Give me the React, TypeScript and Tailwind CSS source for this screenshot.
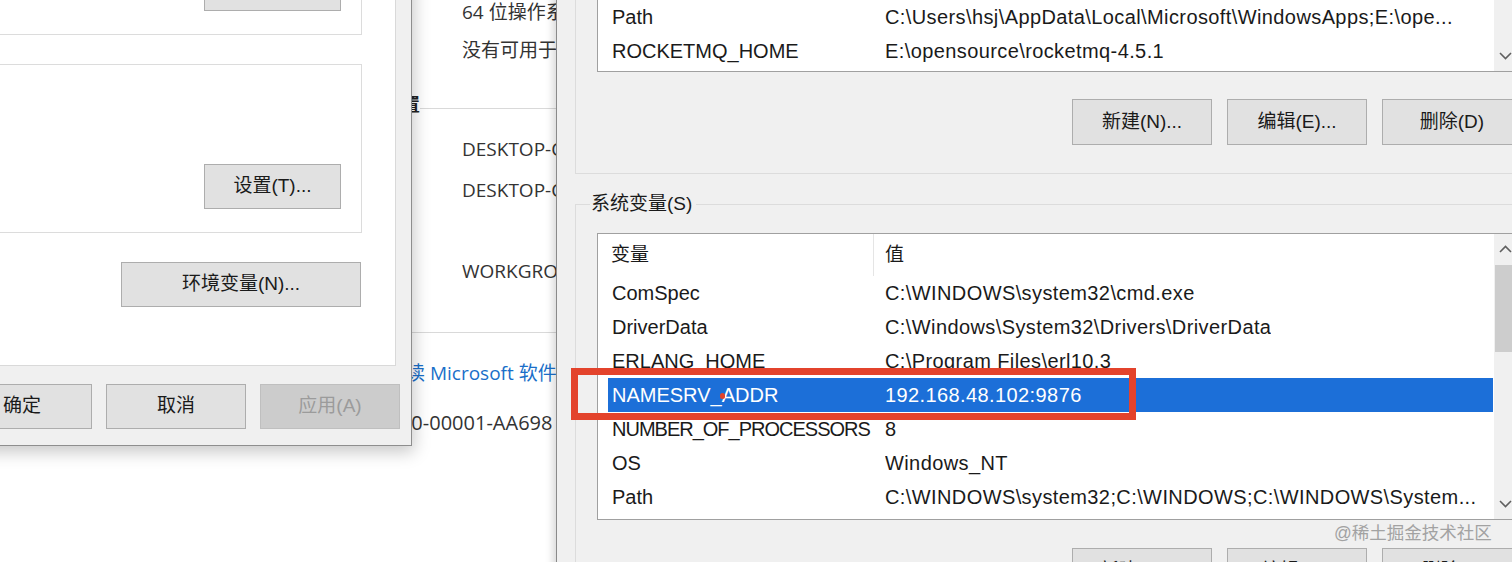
import React from "react";

const F = "font-['Liberation_Sans','Noto_Sans_CJK_SC',sans-serif]";
const FO = "font-['Open_Sans','Noto_Sans_CJK_SC',sans-serif]";

function Btn({
  label,
  className = "",
  disabled = false,
}: {
  label: string;
  className?: string;
  disabled?: boolean;
}) {
  return (
    <div
      className={`flex shrink-0 items-center justify-center border text-[19px] ${F} ${
        disabled
          ? "border-[#bfbfbf] bg-[#cccccc] text-[#9b9b9b]"
          : "border-[#adadad] bg-[#e1e1e1] text-[#1a1a1a]"
      } ${className}`}
    >
      {label}
    </div>
  );
}

function Chevron({ up = false }: { up?: boolean }) {
  return (
    <svg width="13" height="8" viewBox="0 0 13 8" fill="none">
      <path
        d={up ? "M1 7 L6.5 1.5 L12 7" : "M1 1 L6.5 6.5 L12 1"}
        stroke="#5f5f5f"
        strokeWidth="1.6"
      />
    </svg>
  );
}

function Row({
  name,
  value,
  selected = false,
  tight = false,
}: {
  name: string;
  value: string;
  selected?: boolean;
  tight?: boolean;
}) {
  return (
    <div
      className={`flex h-[34px] shrink-0 items-center whitespace-nowrap text-[20px] ${F} ${
        selected ? "bg-[#1c6fd8] text-white" : "text-[#1a1a1a]"
      }`}
    >
      <div className={`w-[277px] shrink-0 pl-[4px] ${tight ? "tracking-[-1px]" : ""}`}>{name}</div>
      <div className="overflow-hidden tracking-[0.4px]">{value}</div>
    </div>
  );
}

export default function App() {
  return (
    <div className="relative h-[562px] w-[1512px] overflow-hidden bg-white">
      {/* background: system info window */}
      <div className={`absolute left-[300px] top-0 flex h-[562px] w-[256px] flex-col overflow-hidden bg-white text-[19px] text-[#333333] ${FO}`}>
        <div className="flex h-[24px] shrink-0 items-center whitespace-nowrap pl-[162px]">64 位操作系统，基于 x64 的处理器</div>
        <div className="mt-[14px] flex h-[24px] shrink-0 items-center whitespace-nowrap pl-[162px]">没有可用于此显示器的笔或触控输入</div>
        <div className="mt-[30px] flex h-[24px] shrink-0 items-center">
          <div className="flex w-[120px] shrink-0 justify-end overflow-hidden whitespace-nowrap text-[18px] font-bold text-[#222222]">
            计算机名、域和工作组设置
          </div>
          <div className="mt-[8px] h-px flex-1 bg-[#d9d9d9]" />
        </div>
        <div className="mt-[21px] flex h-[24px] shrink-0 items-center whitespace-nowrap pl-[162px]">DESKTOP-OFNQ7K1</div>
        <div className="mt-[17px] flex h-[24px] shrink-0 items-center whitespace-nowrap pl-[162px]">DESKTOP-OFNQ7K1</div>
        <div className="mt-[57px] flex h-[24px] shrink-0 items-center whitespace-nowrap pl-[162px]">WORKGROUP</div>
        <div className="mt-[49px] h-px shrink-0 bg-[#d9d9d9]" />
        <div className="mt-[28px] flex h-[24px] shrink-0 items-center whitespace-nowrap pl-[87px] text-[#1a6fc9]">阅读 Microsoft 软件许可条款</div>
        <div className="mt-[26px] flex h-[24px] shrink-0 items-center whitespace-nowrap pl-[2px] text-[20px]">00330-80000-00001-AA698</div>
      </div>

      {/* left dialog: system properties */}
      <div className="absolute left-[-100px] top-[-40px] flex h-[486px] w-[512px] flex-col border-b border-r border-[#8e8e8e] bg-[#f0f0f0] shadow-[2px_6px_16px_rgba(0,0,0,0.22)]">
        <div className="flex h-[406px] w-[496px] shrink-0 flex-col border-b border-r border-[#d9d9d9] bg-white pr-[33px]">
          <div className="flex h-[75px] shrink-0 items-end justify-end border-b border-r border-[#dcdcdc] pb-[23px] pr-[20px]">
            <Btn label="" className="h-[45px] w-[137px]" />
          </div>
          <div className="mt-[29px] flex h-[169px] shrink-0 items-end justify-end border border-[#dcdcdc] pb-[23px] pr-[20px]">
            <Btn label="设置(T)..." className="h-[45px] w-[137px]" />
          </div>
          <Btn label="环境变量(N)..." className="mr-[1px] mt-[29px] h-[45px] w-[240px] self-end" />
        </div>
        <div className="mt-[18px] flex justify-end gap-[14px] pr-[11px]">
          <Btn label="确定" className="h-[45px] w-[140px]" />
          <Btn label="取消" className="h-[45px] w-[140px]" />
          <Btn label="应用(A)" disabled className="h-[45px] w-[140px]" />
        </div>
      </div>

      {/* right dialog: environment variables */}
      <div className="absolute left-[556px] top-[-40px] flex h-[700px] w-[1000px] flex-col border-l border-[#8a8a8a] bg-[#f0f0f0] pl-[18px] shadow-[-3px_0_8px_rgba(0,0,0,0.16)]">
        {/* user variables group */}
        <div className="flex flex-col border-b border-l border-[#dcdcdc] pb-[28px] pl-[21px]">
          <div className="flex h-[112px] w-[924px] shrink-0 border border-[#a0a0a0] bg-white">
            <div className="flex flex-1 flex-col justify-end pb-[3px] pl-[10px] pr-[1px]">
              <Row name="Path" value={"C:\\Users\\hsj\\AppData\\Local\\Microsoft\\WindowsApps;E:\\ope..."} />
              <Row name="ROCKETMQ_HOME" value={"E:\\opensource\\rocketmq-4.5.1"} />
            </div>
            <div className="flex w-[26px] shrink-0 flex-col justify-end bg-[#f0f0f0]">
              <div className="flex h-[30px] items-center justify-center pr-[4px]">
                <Chevron />
              </div>
            </div>
          </div>
          <div className="mt-[27px] flex gap-[15px] pl-[475px]">
            <Btn label="新建(N)..." className="h-[46px] w-[140px]" />
            <Btn label="编辑(E)..." className="h-[46px] w-[140px]" />
            <Btn label="删除(D)" className="h-[46px] w-[140px]" />
          </div>
        </div>

        {/* system variables group */}
        <div className="mt-[18px] flex h-[24px] shrink-0">
          <div className="mt-[12px] w-[15px] border-l border-t border-[#dcdcdc]" />
          <div className={`pl-[1px] pr-[4px] text-[19px] leading-[24px] text-[#1a1a1a] ${F}`}>系统变量(S)</div>
          <div className="mt-[12px] flex-1 border-t border-[#dcdcdc]" />
        </div>
        <div className="flex flex-1 flex-col border-l border-[#dcdcdc] pl-[21px] pt-[17px]">
          <div className="flex h-[287px] w-[924px] shrink-0 border border-[#a0a0a0] bg-white">
            <div className="flex flex-1 flex-col">
              <div className={`flex h-[42px] shrink-0 items-center text-[19px] text-[#1a1a1a] ${F}`}>
                <div className="flex h-full w-[276px] shrink-0 items-center border-r border-[#e5e5e5] pl-[13px]">变量</div>
                <div className="pl-[11px]">值</div>
              </div>
              <div className="flex flex-col pl-[10px] pr-[1px]">
                <Row name="ComSpec" value={"C:\\WINDOWS\\system32\\cmd.exe"} />
                <Row name="DriverData" value={"C:\\Windows\\System32\\Drivers\\DriverData"} />
                <Row name="ERLANG_HOME" value={"C:\\Program Files\\erl10.3"} />
                <Row name="NAMESRV_ADDR" value="192.168.48.102:9876" selected />
                <Row name="NUMBER_OF_PROCESSORS" value="8" tight />
                <Row name="OS" value="Windows_NT" />
                <Row name="Path" value={"C:\\WINDOWS\\system32;C:\\WINDOWS;C:\\WINDOWS\\System..."} />
              </div>
            </div>
            <div className="flex w-[26px] shrink-0 flex-col bg-[#f0f0f0]">
              <div className="flex h-[30px] shrink-0 items-center justify-center pr-[4px]">
                <Chevron up />
              </div>
              <div className="ml-[1px] mt-[1px] h-[87px] shrink-0 bg-[#cdcdcd]" />
              <div className="flex-1" />
              <div className="flex h-[30px] shrink-0 items-center justify-center pr-[4px]">
                <Chevron />
              </div>
            </div>
          </div>
          <div className="mt-[28px] flex gap-[15px] pl-[475px]">
            <Btn label="新建(W)..." className="h-[46px] w-[140px]" />
            <Btn label="编辑(I)..." className="h-[46px] w-[140px]" />
            <Btn label="删除(L)" className="h-[46px] w-[140px]" />
          </div>
        </div>
      </div>

      {/* red highlight box overlay */}
      <div className="absolute left-[571px] top-[368px] h-[52px] w-[565px] border-[7px] border-[#e3432c]" />
      {/* cursor mark */}
      <div className="absolute left-[720px] top-[393px] h-[6px] w-[5px] rounded-full bg-[#e3432c]" />

      {/* watermark */}
      <div className={`absolute left-[1334px] top-[521px] whitespace-nowrap text-[17.5px] leading-[24px] text-[#a2a2a2] ${F}`}>
        @稀土掘金技术社区
      </div>
    </div>
  );
}
